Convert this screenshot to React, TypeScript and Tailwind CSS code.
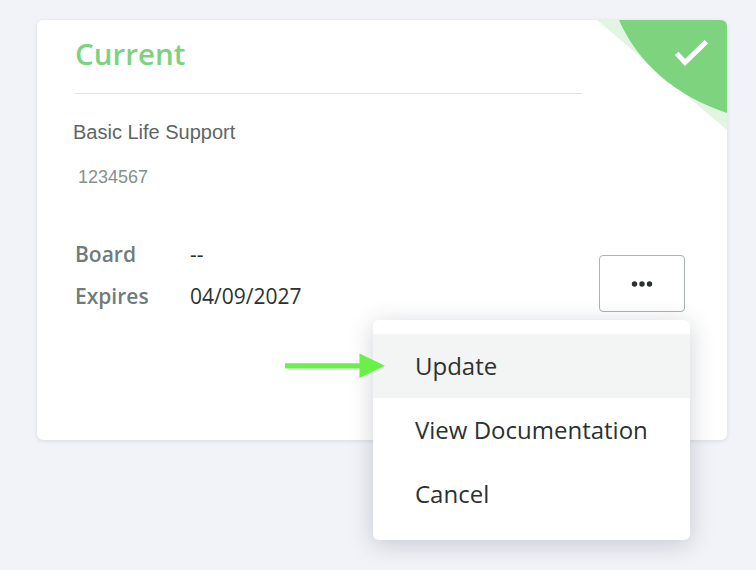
export default function App() {
  return (
    <div className="w-[756px] h-[570px] overflow-hidden bg-[#f1f3f8] pt-5 pl-[37px] font-['Open_Sans',sans-serif]">
      <div className="relative w-[690px] h-[420px] bg-white rounded-md shadow-[0_1px_4px_rgba(60,70,90,0.14)] pl-[38px] pt-[12px]">
        <svg className="absolute right-0 top-0 rounded-tr-md" width="130" height="110" viewBox="0 0 130 110">
          <polygon points="0,0 130,0 130,110" fill="#e1f6e2" />
          <path d="M22,0 C40,42 78,76 130,93 L130,0 Z" fill="#7ed37f" />
          <path d="M79.700,33.300 L88,42.500 L109.300,21.700" fill="none" stroke="#ffffff" strokeWidth="5" />
        </svg>

        <div className="w-[507px] h-[62px] border-b border-[#e2e4e4] text-[29.5px] leading-[44px] font-semibold text-[#7dd280]">Current</div>
        <div className="-ml-0.5 mt-[26px] font-['Liberation_Sans',sans-serif] text-[20px] leading-6 text-[#5d6665]">Basic Life Support</div>
        <div className="ml-[3px] mt-[21px] font-['Liberation_Sans',sans-serif] text-[18px] leading-6 text-[#84918f]">1234567</div>

        <div className="mt-[49px] grid grid-cols-[115px_1fr] gap-y-[10px] text-[21px] leading-8">
          <div className="font-semibold text-[#707c7a]">Board</div>
          <div className="text-[#2b3230]">--</div>
          <div className="font-semibold text-[#707c7a]">Expires</div>
          <div className="text-[#2b3230]">04/09/2027</div>
        </div>

        <button className="absolute left-[562px] top-[235px] w-[86px] h-[57px] flex items-center justify-center rounded border border-[#a8b5b3] bg-white">
          <svg width="22" height="8" viewBox="0 0 22 8">
            <circle cx="3.500" cy="4" r="2.700" fill="#2b3230" />
            <circle cx="11" cy="4" r="2.700" fill="#2b3230" />
            <circle cx="18.500" cy="4" r="2.700" fill="#2b3230" />
          </svg>
        </button>

        <div className="absolute left-[336px] top-[300px] w-[317px] h-[220px] py-[14px] rounded-md bg-white shadow-[0_4px_24px_rgba(40,50,70,0.22)] text-[24px] text-[#2b3230]">
          <div className="h-16 pl-[42px] flex items-center bg-[#f3f5f4]">Update</div>
          <div className="h-16 pl-[42px] flex items-center">View Documentation</div>
          <div className="h-16 pl-[42px] flex items-center">Cancel</div>
        </div>

        <svg className="absolute left-[248px] top-[333px]" width="100" height="26" viewBox="0 0 100 26">
          <path d="M0,10.200 L74.500,10.200 L74.500,0.500 L100,12.800 L74.500,25 L74.500,15.500 L0,15.500 Z" fill="#6bf04a" />
        </svg>
      </div>
    </div>
  );
}
